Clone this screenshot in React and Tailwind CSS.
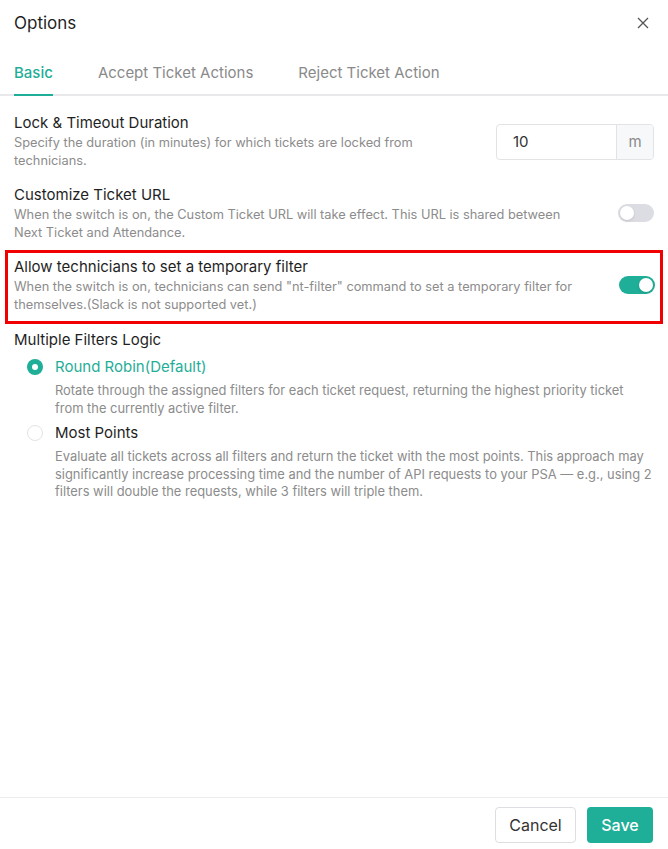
import { useState } from 'react'

const font = { fontFamily: 'Inter, "Noto Sans", sans-serif' }

function Toggle({ on, onChange }) {
  return (
    <button
      type="button"
      onClick={onChange}
      className={`relative w-[36px] h-[18px] rounded-full shrink-0 transition-colors ${on ? 'bg-[#1fae98]' : 'bg-[#dcdde3]'}`}
    >
      <span
        className={`absolute top-[2px] w-[14px] h-[14px] rounded-full bg-white shadow-sm transition-all ${on ? 'left-[20px]' : 'left-[2px]'}`}
      />
    </button>
  )
}

function Radio({ checked, label, desc, onSelect }) {
  return (
    <div className="flex items-start gap-[12px]">
      <button type="button" onClick={onSelect} className="mt-[3px] shrink-0 self-start">
        {checked ? (
          <span className="flex items-center justify-center w-[16px] h-[16px] rounded-full bg-[#1fae98]">
            <span className="w-[6px] h-[6px] rounded-full bg-white" />
          </span>
        ) : (
          <span className="block w-[16px] h-[16px] rounded-full border border-[#e3e3e3] bg-white" />
        )}
      </button>
      <div>
        <div className={`text-[15px] leading-[22px] ${checked ? 'text-[#1fae98]' : 'text-[#1f1f1f]'}`}>{label}</div>
        <p className="text-[12.9px] leading-[17.5px] text-[#8c8c8c] mt-[4px]">{desc}</p>
      </div>
    </div>
  )
}

export default function App() {
  const [tab, setTab] = useState('Basic')
  const [customUrl, setCustomUrl] = useState(false)
  const [tempFilter, setTempFilter] = useState(true)
  const [logic, setLogic] = useState('rr')
  const [duration, setDuration] = useState('10')

  const tabs = ['Basic', 'Accept Ticket Actions', 'Reject Ticket Action']

  return (
    <div style={font} className="w-full h-screen bg-white flex flex-col text-[#1f1f1f]">
      <div className="flex items-center justify-between px-[14px] pt-[11px] h-[34px]">
        <h2 className="text-[17px] leading-[22px]">Options</h2>
        <button type="button" className="text-[#555] pr-[5px]">
          <svg width="12" height="12" viewBox="0 0 12 12" stroke="currentColor" strokeWidth="1.3">
            <path d="M1 1L11 11M11 1L1 11" />
          </svg>
        </button>
      </div>

      <div className="mt-[28px] flex gap-[45px] px-[14px] border-b-2 border-[#e9e9ec]">
        {tabs.map((t) => (
          <button
            key={t}
            type="button"
            onClick={() => setTab(t)}
            className={`relative pb-[10px] text-[15px] leading-[22px] -mb-[2px] border-b-2 ${tab === t ? 'text-[#1fae98] font-medium border-[#1fae98]' : 'text-[#8a8a8a] border-transparent'}`}
          >
            {t}
          </button>
        ))}
      </div>

      <div className="flex-1 px-[14px] pt-[16px] flex flex-col gap-[15px]">
        <div className="flex items-center justify-between gap-[40px] min-h-[57px]">
          <div>
            <div className="text-[15px] leading-[22px]">Lock &amp; Timeout Duration</div>
            <p className="text-[12.8px] leading-[17.5px] text-[#8c8c8c] max-w-[420px]">
              Specify the duration (in minutes) for which tickets are locked from technicians.
            </p>
          </div>
          <div className="flex w-[158px] h-[36px] border border-[#e3e3e6] rounded-[4px] overflow-hidden shrink-0 mt-[3px]">
            <input
              value={duration}
              onChange={(e) => setDuration(e.target.value)}
              className="flex-1 min-w-0 px-[16px] text-[15px] text-[#333] outline-none"
            />
            <span className="w-[37px] flex items-center justify-center bg-[#f7f8fa] border-l border-[#e3e3e6] text-[15px] text-[#8a8a8a]">m</span>
          </div>
        </div>

        <div className="flex items-center justify-between gap-[40px]">
          <div>
            <div className="text-[15px] leading-[22px]">Customize Ticket URL</div>
            <p className="text-[12.8px] leading-[17.5px] text-[#8c8c8c] max-w-[560px]">
              When the switch is on, the Custom Ticket URL will take effect. This URL is shared between Next Ticket and Attendance.
            </p>
          </div>
          <Toggle on={customUrl} onChange={() => setCustomUrl(!customUrl)} />
        </div>

        <div className="-mx-[9px] -mt-[6px] -mb-[10px] border-[3px] border-[#f00000] pl-[6px] pr-[5px] pt-[3px] pb-[8px]">
          <div className="flex items-center justify-between gap-[30px]">
            <div>
              <div className="text-[15px] leading-[22px]">Allow technicians to set a temporary filter</div>
              <p className="text-[12.8px] leading-[17.5px] text-[#8c8c8c] max-w-[580px]">
                When the switch is on, technicians can send "nt-filter" command to set a temporary filter for themselves.(Slack is not supported vet.)
              </p>
            </div>
            <Toggle on={tempFilter} onChange={() => setTempFilter(!tempFilter)} />
          </div>
        </div>

        <div>
          <div className="text-[15px] leading-[22px]">Multiple Filters Logic</div>
          <div className="pl-[13px] mt-[5px] flex flex-col gap-[5px]">
            <Radio
              checked={logic === 'rr'}
              onSelect={() => setLogic('rr')}
              label="Round Robin(Default)"
              desc="Rotate through the assigned filters for each ticket request, returning the highest priority ticket from the currently active filter."
            />
            <Radio
              checked={logic === 'mp'}
              onSelect={() => setLogic('mp')}
              label="Most Points"
              desc="Evaluate all tickets across all filters and return the ticket with the most points. This approach may significantly increase processing time and the number of API requests to your PSA — e.g., using 2 filters will double the requests, while 3 filters will triple them."
            />
          </div>
        </div>
      </div>

      <div className="border-t border-[#ececee] px-[15px] pt-[9px] pb-[6px] flex justify-end gap-[11px]">
        <button type="button" className="h-[36px] w-[81px] border border-[#dedee2] rounded-[4px] text-[16px] text-[#333] bg-white">
          Cancel
        </button>
        <button type="button" className="h-[36px] w-[66px] rounded-[4px] text-[16px] font-medium text-white bg-[#1fae98]">
          Save
        </button>
      </div>
    </div>
  )
}
